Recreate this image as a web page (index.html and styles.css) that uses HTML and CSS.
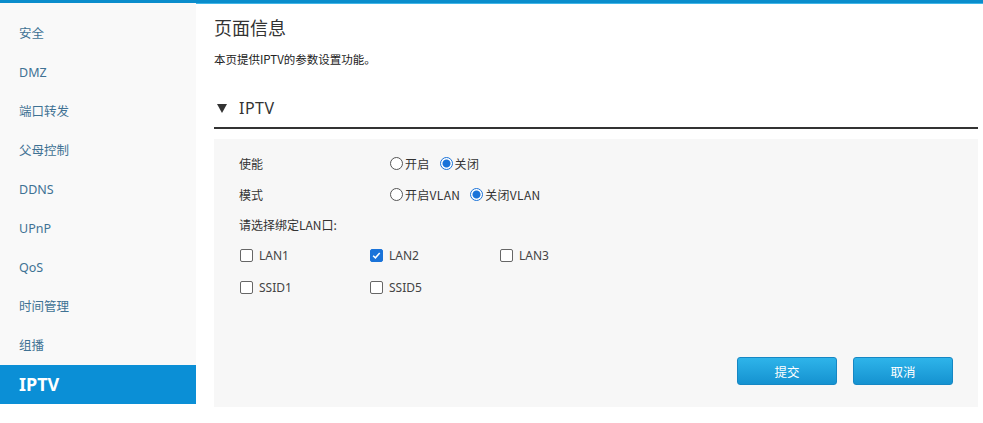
FILE: index.html
```html
<!DOCTYPE html>
<html lang="zh-CN">
<head>
  <meta charset="UTF-8">
  <title>IPTV</title>
  <link rel="stylesheet" href="styles.css">
</head>
<body>
  <div class="topbar"></div>
  <div class="layout">
    <ul class="menu">
      <li>安全</li>
      <li>DMZ</li>
      <li>端口转发</li>
      <li>父母控制</li>
      <li>DDNS</li>
      <li>UPnP</li>
      <li>QoS</li>
      <li>时间管理</li>
      <li>组播</li>
      <li class="active">IPTV</li>
    </ul>

    <div class="main">
      <h1 class="title">页面信息</h1>
      <p class="desc">本页提供IPTV的参数设置功能。</p>

      <div class="section-head">
        <span class="arrow"></span>
        <span>IPTV</span>
      </div>

      <div class="panel">
        <div class="row">
          <span class="label">使能</span>
          <label class="opt"><span class="radio"></span>开启</label>
          <label class="opt"><span class="radio on"></span>关闭</label>
        </div>
        <div class="row">
          <span class="label">模式</span>
          <label class="opt"><span class="radio"></span>开启VLAN</label>
          <label class="opt"><span class="radio on"></span>关闭VLAN</label>
        </div>
        <div class="row short">
          <span class="label">请选择绑定LAN口:</span>
        </div>
        <div class="row checks">
          <label class="chk"><span class="box"></span>LAN1</label>
          <label class="chk"><span class="box on"></span>LAN2</label>
          <label class="chk"><span class="box"></span>LAN3</label>
        </div>
        <div class="row checks">
          <label class="chk"><span class="box"></span>SSID1</label>
          <label class="chk"><span class="box"></span>SSID5</label>
        </div>

        <div class="actions">
          <button class="btn">提交</button>
          <button class="btn">取消</button>
        </div>
      </div>
    </div>
  </div>
</body>
</html>
```

FILE: styles.css
```css
* {
  margin: 0;
  padding: 0;
  box-sizing: border-box;
}

body {
  font-family: "Noto Sans", "Noto Sans CJK SC", sans-serif;
  background: #fff;
  color: #333;
  width: 983px;
  height: 423px;
  overflow: hidden;
}

.topbar {
  height: 4px;
  background: #0a8dcc;
  border-bottom: 1px solid #41b6e8;
}

.layout {
  display: flex;
  align-items: flex-start;
}

.menu {
  list-style: none;
  width: 196px;
  background: #f9f9f9;
  padding-top: 11px;
  margin-top: -1px;
}

.menu li {
  height: 39px;
  line-height: 39px;
  padding-left: 19px;
  font-size: 12.5px;
  color: #3f7294;
}

.menu li.active {
  background: #0b8fd6;
  color: #fff;
  font-size: 18px;
  font-weight: bold;
}

.main {
  flex: 1;
  margin-left: 18px;
  margin-right: 5px;
}

.title {
  font-size: 18px;
  font-weight: normal;
  line-height: 24px;
  margin-top: 11px;
  color: #333;
  font-family: "Noto Sans CJK SC", sans-serif;
}

.desc {
  font-size: 11.5px;
  line-height: 16px;
  margin-top: 12px;
  color: #222;
  font-family: "Noto Sans CJK SC", sans-serif;
}

.section-head {
  display: flex;
  align-items: center;
  margin-top: 31px;
  height: 31px;
  padding-left: 3px;
  padding-bottom: 9px;
  border-bottom: 2px solid #333;
  font-size: 16px;
  color: #333;
  letter-spacing: 0.5px;
}

.arrow {
  width: 0;
  height: 0;
  border-left: 5px solid transparent;
  border-right: 5px solid transparent;
  border-top: 9px solid #333;
  margin-right: 12px;
  margin-top: 1px;
}

.panel {
  display: flex;
  flex-direction: column;
  background: #f7f7f7;
  margin-top: 10px;
  height: 268px;
  padding: 9px 25px 22px 25px;
  font-family: "Noto Sans CJK SC", sans-serif;
  font-size: 12px;
  color: #333;
}

.row {
  display: flex;
  align-items: center;
  height: 31px;
  flex-shrink: 0;
}

.row.short {
  height: 29px;
}

.label {
  width: 151px;
}

.opt {
  display: flex;
  align-items: center;
  margin-right: 10px;
  letter-spacing: 0.3px;
}

.radio {
  width: 13px;
  height: 13px;
  border: 1px solid #555;
  border-radius: 50%;
  margin-right: 2px;
  background: #fff;
}

.radio.on {
  border-color: #1a73d9;
  background: radial-gradient(circle, #1a73d9 0, #1a73d9 3.5px, #fff 4.5px);
}

.checks {
  height: 32px;
  font-family: "Noto Sans", sans-serif;
}

.chk {
  display: flex;
  align-items: center;
  width: 130px;
  color: #444;
}

.box {
  width: 13px;
  height: 13px;
  border: 1px solid #666;
  border-radius: 2px;
  background: #fff;
  margin-right: 6px;
  margin-left: 1px;
}

.box.on {
  border-color: #1a73d9;
  background: #1a73d9 url("data:image/svg+xml;utf8,<svg xmlns='http://www.w3.org/2000/svg' viewBox='0 0 13 13'><path d='M2.5 6.8 L5.2 9.3 L10.3 3.5' fill='none' stroke='white' stroke-width='1.8'/></svg>") center/100% no-repeat;
}

.actions {
  margin-top: auto;
  display: flex;
  justify-content: flex-end;
  gap: 16px;
}

.btn {
  width: 100px;
  height: 28px;
  border: 1px solid #1687c4;
  border-radius: 3px;
  background: linear-gradient(#2eb4ea, #1592d0);
  color: #fff;
  font-family: "Noto Sans CJK SC", sans-serif;
  font-size: 12.5px;
}
```
